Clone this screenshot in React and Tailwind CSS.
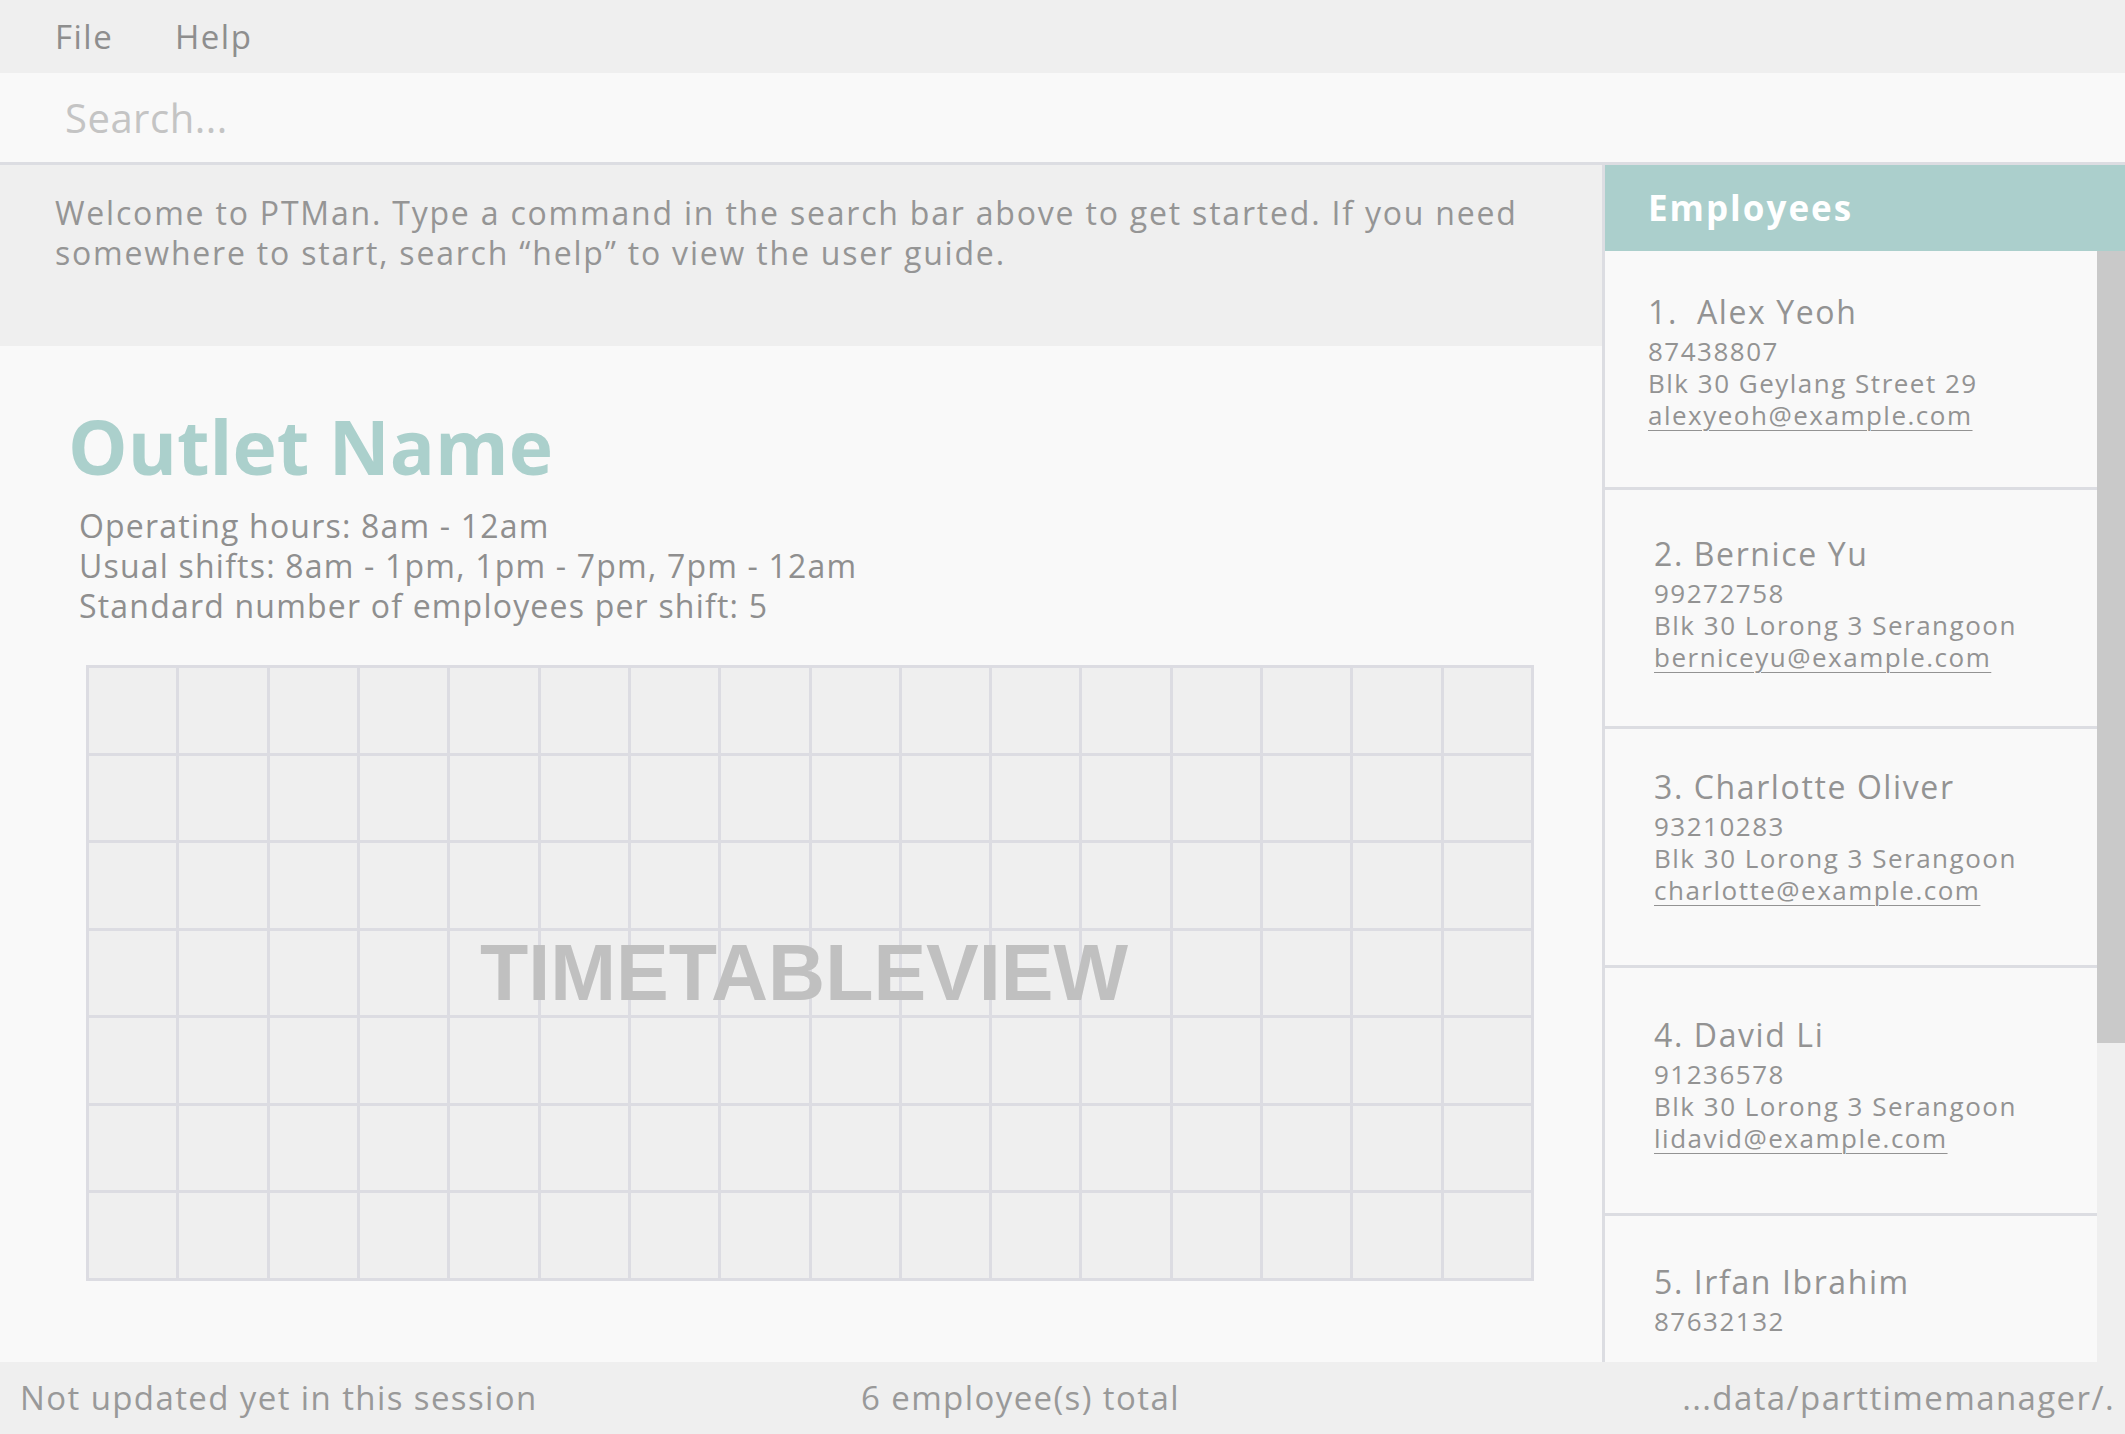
import { useState } from "react";

const employees = [
  {
    index: "1.",
    name: "Alex Yeoh",
    phone: "87438807",
    address: "Blk 30 Geylang Street 29",
    email: "alexyeoh@example.com",
    height: "h-[239px]",
    pad: "pt-[41px] pl-[43px]",
    wide: true,
  },
  {
    index: "2.",
    name: "Bernice Yu",
    phone: "99272758",
    address: "Blk 30 Lorong 3 Serangoon",
    email: "berniceyu@example.com",
    height: "h-[239px]",
    pad: "pt-[44px] pl-[49px]",
  },
  {
    index: "3.",
    name: "Charlotte Oliver",
    phone: "93210283",
    address: "Blk 30 Lorong 3 Serangoon",
    email: "charlotte@example.com",
    height: "h-[239px]",
    pad: "pt-[38px] pl-[49px]",
  },
  {
    index: "4.",
    name: "David Li",
    phone: "91236578",
    address: "Blk 30 Lorong 3 Serangoon",
    email: "lidavid@example.com",
    height: "h-[248px]",
    pad: "pt-[47px] pl-[49px]",
  },
  {
    index: "5.",
    name: "Irfan Ibrahim",
    phone: "87632132",
    height: "h-[248px]",
    pad: "pt-[46px] pl-[49px]",
  },
];

const font = { fontFamily: '"Open Sans", "Noto Sans", sans-serif' };

const EmployeeCard = ({ emp }) => (
  <div
    className={`${emp.height} shrink-0 border-b-[3px] border-[#dcdde2] bg-[#f9f9f9] ${emp.pad} text-[#939393]`}
  >
    <div className="text-[32px] leading-[40px] tracking-[1.6px] whitespace-nowrap">
      {emp.wide ? (
        <>
          <span className="mr-[19px]">{emp.index}</span>
          {emp.name}
        </>
      ) : (
        `${emp.index} ${emp.name}`
      )}
    </div>
    <div className="mt-[3px] text-[26px] leading-[32px] tracking-[1.5px] whitespace-nowrap">
      <div>{emp.phone}</div>
      {emp.address && <div>{emp.address}</div>}
      {emp.email && (
        <div className="underline decoration-1 underline-offset-[5px]">
          {emp.email}
        </div>
      )}
    </div>
  </div>
);

const Timetable = () => {
  const cells = Array.from({ length: 16 * 7 });
  return (
    <div className="relative ml-[86px] mt-[39px] w-[1448px] h-[616px]">
      <div className="grid grid-cols-16 grid-rows-7 gap-[3px] p-[3px] bg-[#dcdce2] w-full h-full">
        {cells.map((_, i) => (
          <div key={i} className="bg-[#efefef]" />
        ))}
      </div>
      <div
        className="absolute inset-0 flex items-center justify-center pr-[12px] text-[79px] font-bold text-[#c0c0c0]"
        style={{ fontFamily: '"Liberation Sans", Arial, sans-serif' }}
      >
        TIMETABLEVIEW
      </div>
    </div>
  );
};

export default function App() {
  const [query, setQuery] = useState("");

  return (
    <div
      className="w-[2125px] h-[1434px] flex flex-col bg-[#f9f9f9] overflow-hidden"
      style={font}
    >
      {/* menu bar */}
      <div className="h-[73px] shrink-0 bg-[#efefef] flex items-center pl-[55px] text-[33px] tracking-[1.5px] text-[#8e8e8e]">
        <span className="w-[120px]">File</span>
        <span>Help</span>
      </div>

      {/* command box */}
      <div className="h-[92px] shrink-0 bg-[#f9f9f9] border-b-[3px] border-[#dcdde2] flex items-center">
        <input
          value={query}
          onChange={(e) => setQuery(e.target.value)}
          placeholder="Search..."
          className="w-full h-full bg-transparent outline-none pl-[65px] text-[40px] tracking-[0.5px] text-[#8e8e8e] placeholder:text-[#c4c4c4]"
          style={font}
        />
      </div>

      <div className="flex flex-1 min-h-0">
        {/* left side */}
        <div className="w-[1602px] shrink-0 flex flex-col">
          <div className="h-[181px] shrink-0 bg-[#efefef] pl-[55px] pt-[28px] text-[32px] leading-[40px] tracking-[1.8px] text-[#959595]">
            <p className="whitespace-nowrap">
              Welcome to PTMan. Type a command in the search bar above to get
              started. If you need
            </p>
            <p>somewhere to start, search “help” to view the user guide.</p>
          </div>

          <div className="flex-1 bg-[#f9f9f9] pt-[60px]">
            <h1 className="pl-[68px] text-[75px] leading-[80px] font-bold text-[#abd0cc]">
              Outlet Name
            </h1>
            <div className="pl-[79px] mt-[20px] text-[32px] leading-[40px] tracking-[1.2px] text-[#8f8f8f]">
              <p>Operating hours: 8am - 12am</p>
              <p>Usual shifts: 8am - 1pm, 1pm - 7pm, 7pm - 12am</p>
              <p>Standard number of employees per shift: 5</p>
            </div>
            <Timetable />
          </div>
        </div>

        {/* employee list */}
        <div className="flex-1 flex flex-col border-l-[3px] border-[#dcdde2]">
          <div className="h-[86px] shrink-0 bg-[#abcfcc] flex items-center pl-[43px] text-[35px] tracking-[2px] font-bold text-white">
            Employees
          </div>
          <div className="flex flex-1 min-h-0">
            <div className="flex-1 flex flex-col overflow-hidden bg-[#f9f9f9]">
              {employees.map((emp) => (
                <EmployeeCard key={emp.index} emp={emp} />
              ))}
            </div>
            <div className="w-[28px] shrink-0 bg-[#efefef]">
              <div className="h-[792px] bg-[#c9c9c9]" />
            </div>
          </div>
        </div>
      </div>

      {/* status bar */}
      <div className="h-[72px] shrink-0 bg-[#efefef] flex items-center pl-[20px] pr-[10px] text-[33px] tracking-[1.4px] text-[#999999]">
        <span className="w-[841px] shrink-0">Not updated yet in this session</span>
        <span>6 employee(s) total</span>
        <span className="ml-auto">...data/parttimemanager/.</span>
      </div>
    </div>
  );
}
